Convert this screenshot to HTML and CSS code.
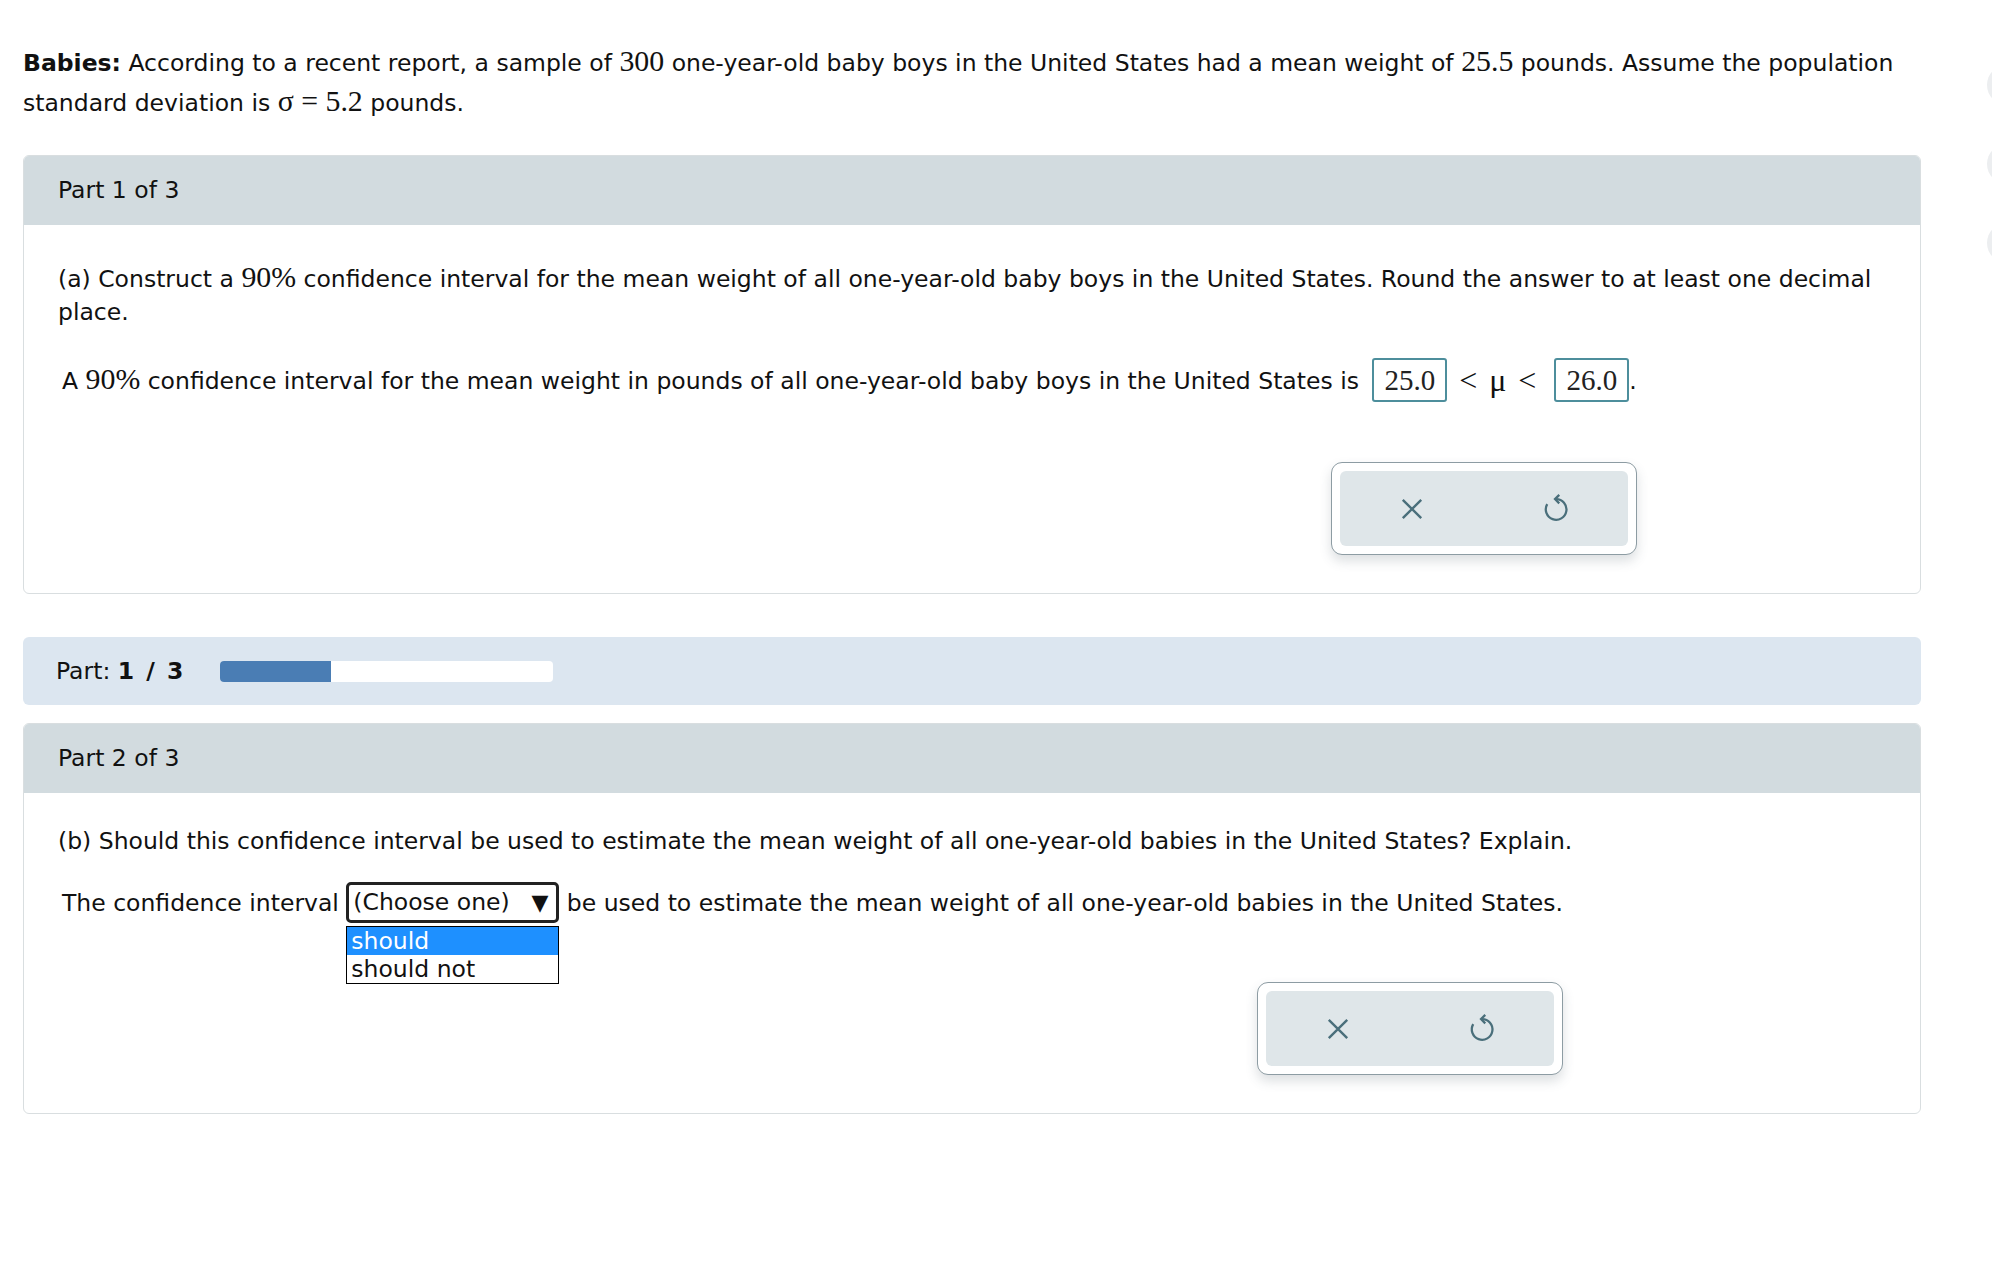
FILE: index.html
```html
<!DOCTYPE html>
<html lang="en">
<head>
    <meta charset="UTF-8">
    <title>Babies - Confidence Interval</title>
    <link rel="stylesheet" href="styles.css">
</head>
<body>
<div class="page">
    <p class="intro"><b>Babies:</b> According to a recent report, a sample of <span class="math">300</span> one-year-old baby boys in the United States had a mean weight of <span class="math">25.5</span> pounds. Assume the population standard deviation is <span class="math">σ = 5.2</span> pounds.</p>

    <!-- Part 1 -->
    <section class="card">
        <div class="card-head">Part 1 of 3</div>
        <div class="card-body part-a">
            <p class="question">(a) Construct a <span class="math">90%</span> confidence interval for the mean weight of all one-year-old baby boys in the United States. Round the answer to at least one decimal place.</p>
            <div class="answer">
                <div class="answer-line">A <span class="math">90%</span> confidence interval for the mean weight in pounds of all one-year-old baby boys in the United States is <span class="box">25.0</span><span class="rel">&lt;</span><span class="mu">μ</span><span class="rel">&lt;</span><span class="box">26.0</span>.</div>
                <div class="actions">
                    <div class="actions-box">
                        <button class="act" title="Clear">
                            <svg width="34" height="34" viewBox="0 0 24 24"><path d="M5.5 5.5 L18.5 18.5 M18.5 5.5 L5.5 18.5" stroke="#4a6f7b" stroke-width="1.7" fill="none"/></svg>
                        </button>
                        <button class="act" title="Undo">
                            <svg width="34" height="34" viewBox="0 0 24 24"><path d="M12 5 A7.3 7.3 0 1 1 5.8 8.6" stroke="#4a6f7b" stroke-width="1.6" fill="none"/><path d="M14.3 2 L11.3 5 L14.3 8" stroke="#4a6f7b" stroke-width="1.6" fill="none"/></svg>
                        </button>
                    </div>
                </div>
            </div>
        </div>
    </section>

    <div class="progress">
        <span class="progress-label">Part: <b>1 / 3</b></span>
        <div class="bar"><div class="fill" style="width: 33.3%"></div></div>
    </div>

    <!-- Part 2 -->
    <section class="card">
        <div class="card-head">Part 2 of 3</div>
        <div class="card-body part-b">
            <p class="question">(b) Should this confidence interval be used to estimate the mean weight of all one-year-old babies in the United States? Explain.</p>
            <div class="answer">
                <div class="answer-line">The confidence interval <span class="select-wrap"><span class="select"><span>(Choose one)</span><span class="caret">▼</span></span><span class="options"><span class="opt active">should</span><span class="opt">should not</span></span></span> be used to estimate the mean weight of all one-year-old babies in the United States.</div>
                <div class="actions">
                    <div class="actions-box">
                        <button class="act" title="Clear">
                            <svg width="34" height="34" viewBox="0 0 24 24"><path d="M5.5 5.5 L18.5 18.5 M18.5 5.5 L5.5 18.5" stroke="#4a6f7b" stroke-width="1.7" fill="none"/></svg>
                        </button>
                        <button class="act" title="Undo">
                            <svg width="34" height="34" viewBox="0 0 24 24"><path d="M12 5 A7.3 7.3 0 1 1 5.8 8.6" stroke="#4a6f7b" stroke-width="1.6" fill="none"/><path d="M14.3 2 L11.3 5 L14.3 8" stroke="#4a6f7b" stroke-width="1.6" fill="none"/></svg>
                        </button>
                    </div>
                </div>
            </div>
        </div>
    </section>
</div>

<div class="side-rail">
    <div class="dot"></div>
    <div class="dot"></div>
    <div class="dot"></div>
</div>
</body>
</html>
```

FILE: styles.css
```css
body {
    margin: 0;
    font-family: "DejaVu Sans", Verdana, sans-serif;
    font-size: 23.5px;
    color: #111;
    background: #fff;
}

.page {
    width: 1898px;
    padding: 43px 0 0 23px;
}

.intro {
    margin: 0;
    line-height: 40px;
}

.math {
    font-family: "Liberation Serif", "Times New Roman", serif;
    font-size: 1.27em;
    line-height: 1;
}

/* Cards */
.card {
    margin-top: 32px;
    border: 1px solid #d9dee0;
    border-radius: 6px;
    overflow: hidden;
}

.card-head {
    height: 69px;
    line-height: 69px;
    padding-left: 34px;
    background-color: #d2dbdf;
}

.card-body {
    padding: 37px 34px 38px 34px;
}

.part-b {
    padding-top: 32px;
}

.question {
    margin: 0;
    line-height: 33px;
}

.answer {
    display: inline-block;
    margin-top: 29px;
    padding-left: 4px;
}

.part-b .answer {
    margin-top: 22px;
}

.answer-line {
    line-height: 46px;
    white-space: nowrap;
}

.box {
    display: inline-block;
    vertical-align: middle;
    height: 40px;
    line-height: 40px;
    padding: 0 10px;
    margin: 0 0 5px 6px;
    border: 2px solid #4d8e9c;
    border-radius: 3px;
    font-family: "Liberation Serif", "Times New Roman", serif;
    font-size: 29px;
    color: #222;
}

.rel,
.mu {
    display: inline-block;
    vertical-align: middle;
    font-family: "Liberation Serif", "Times New Roman", serif;
    font-size: 32px;
    line-height: 40px;
    margin-bottom: 5px;
}

.rel {
    margin: 0 12px 5px;
}

/* Buttons under each answer */
.actions {
    display: flex;
    justify-content: flex-end;
    margin-top: 55px;
}

.part-b .actions {
    margin-top: 55px;
}

.actions-box {
    display: flex;
    width: 288px;
    height: 75px;
    padding: 8px 8px;
    background: #fff;
    border: 1px solid #8d9ca3;
    border-radius: 11px;
    box-shadow: 0 6px 12px rgba(60, 80, 90, 0.18);
}

.act {
    flex: 1;
    display: flex;
    align-items: center;
    justify-content: center;
    background-color: #dfe6e9;
    border: none;
    padding: 0;
    cursor: pointer;
}

.act:first-child { border-radius: 6px 0 0 6px; }
.act:last-child { border-radius: 0 6px 6px 0; }

/* Progress strip */
.progress {
    display: flex;
    align-items: center;
    height: 68px;
    margin-top: 43px;
    padding-left: 33px;
    background-color: #dce6f0;
    border-radius: 6px;
}

.progress-label {
    width: 164px;
}

.progress-label b {
    letter-spacing: 1.5px;
    word-spacing: 1px;
}

.bar {
    width: 333px;
    height: 21px;
    background: #fff;
    border-radius: 4px;
    overflow: hidden;
}

.fill {
    height: 100%;
    background-color: #4a7db4;
}

.progress + .card {
    margin-top: 18px;
}

/* Fake select with open list */
.select-wrap {
    position: relative;
    display: inline-block;
    vertical-align: middle;
    margin-bottom: 4px;
}

.select {
    display: flex;
    align-items: center;
    justify-content: space-between;
    box-sizing: border-box;
    width: 213px;
    height: 41px;
    padding: 0 8px 0 4px;
    border: 3px solid #222;
    border-radius: 5px;
    line-height: 1;
}

.caret {
    font-size: 22px;
}

.options {
    position: absolute;
    top: 44px;
    left: 0;
    width: 213px;
    box-sizing: border-box;
    border: 1px solid #000;
    background: #fff;
    line-height: 28px;
}

.opt {
    display: block;
    padding-left: 4px;
}

.opt.active {
    background-color: #1e90ff;
    color: #fff;
}

/* Right edge tool buttons */
.side-rail {
    position: fixed;
    top: 65px;
    right: -35px;
    display: flex;
    flex-direction: column;
    gap: 39px;
}

.dot {
    width: 40px;
    height: 40px;
    border-radius: 50%;
    background: #eceef0;
}
```
